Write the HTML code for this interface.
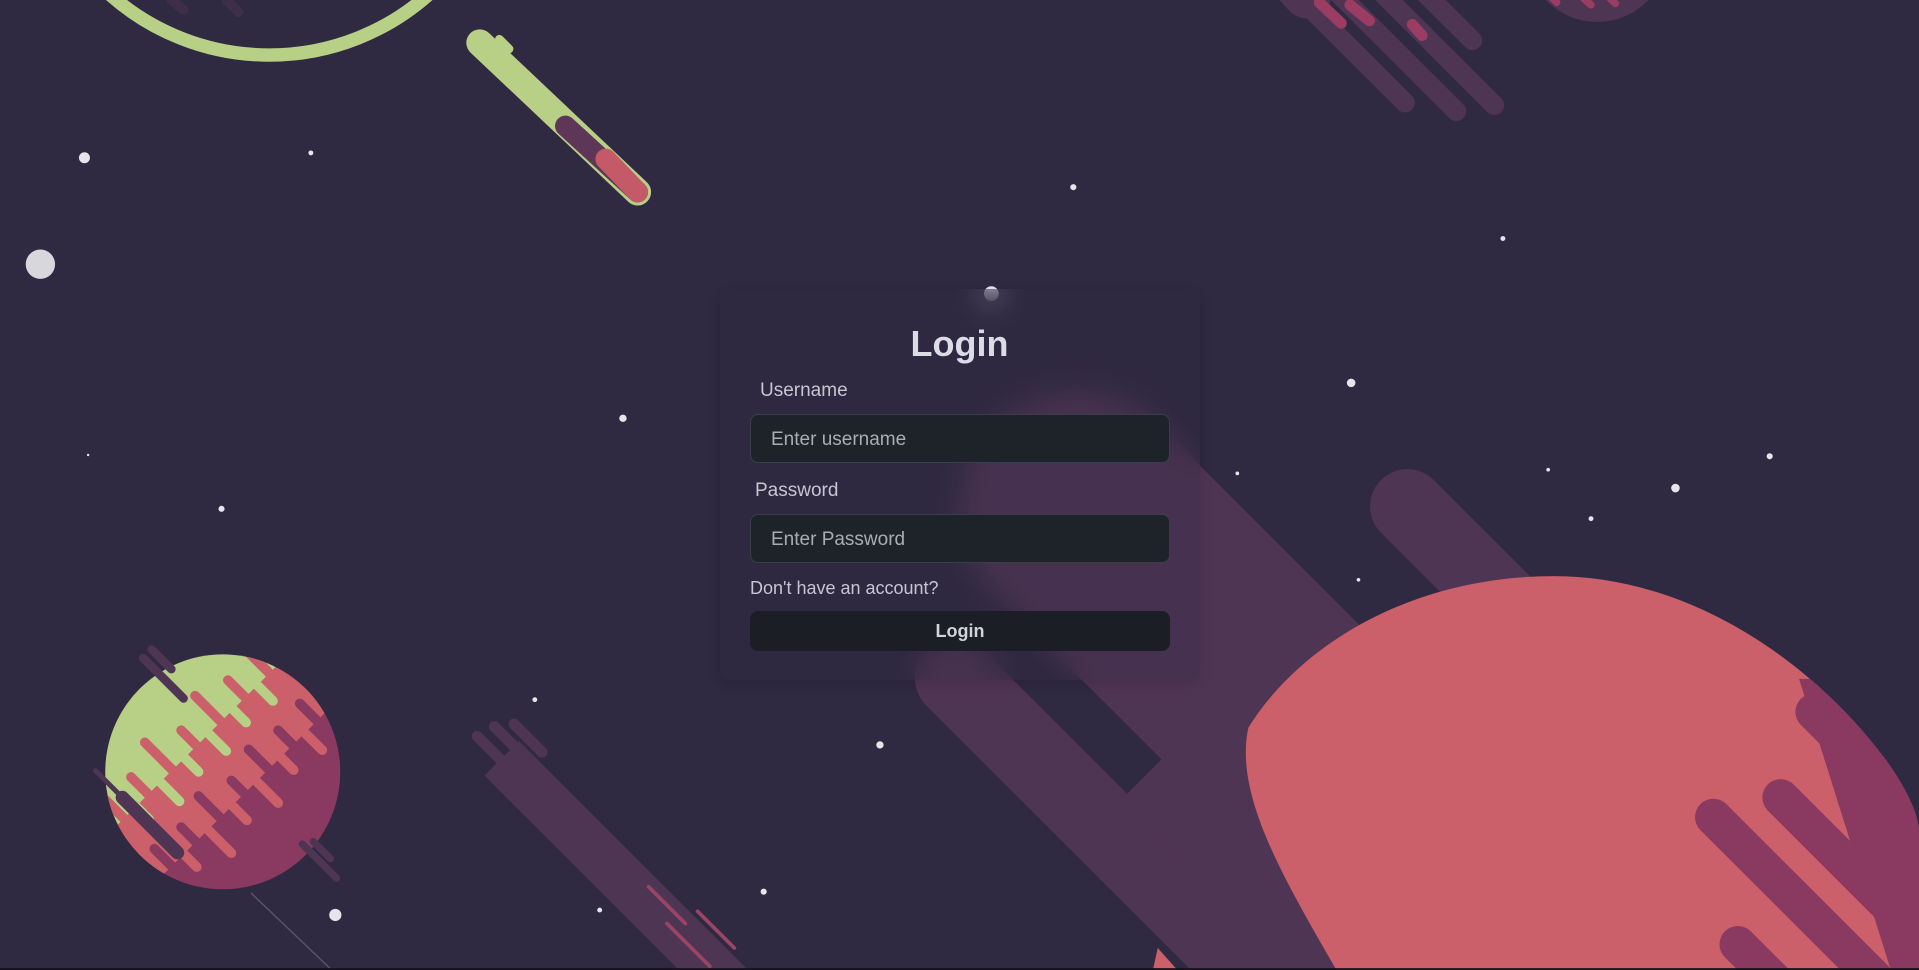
<!DOCTYPE html>
<html><head><meta charset="utf-8"><style>
html,body{margin:0;padding:0;width:1919px;height:970px;overflow:hidden;background:#2f2941;font-family:"Liberation Sans",sans-serif;position:relative}
svg.bg{position:absolute;left:0;top:0;width:1919px;height:970px;display:block}
.card{position:absolute;left:720px;top:289px;width:480px;height:391px;border-radius:10px;background:rgba(47,41,66,0.25);backdrop-filter:blur(14px);-webkit-backdrop-filter:blur(14px);box-shadow:0 4px 14px rgba(0,0,0,0.12)}
.t{position:absolute;white-space:nowrap;line-height:1}
.inp{position:absolute;left:750px;width:418px;height:47px;border:1px solid #3a3f46;border-radius:8px;background:#1e232a;}
.inp span{position:absolute;left:20px;top:14px;font-size:19px;color:#a9adb3}
.btn{position:absolute;left:750px;top:611px;width:420px;height:40px;border-radius:8px;background:#1b1f25;color:#d2d2da;font-size:18px;font-weight:bold;text-align:center;line-height:40px}
</style></head><body>
<svg class="bg" viewBox="0 0 1568 793" preserveAspectRatio="none">
<defs>
<clipPath id="bp"><circle cx="182" cy="631" r="96"/></clipPath>
<clipPath id="bigp"><path d="M1092,793 C1050,720 1008,650 1020,595 C1060,530 1150,471 1270,471 C1380,471 1480,540 1540,620 C1555,640 1568,665 1568,680 L1568,793 Z"/></clipPath>
<clipPath id="trp"><circle cx="1305" cy="-40" r="58"/></clipPath>
</defs>
<circle cx="220" cy="-151" r="196" fill="none" stroke="#b8cf86" stroke-width="11"/>
<path d="M140,0 L150,8 M185,0 L195,10" stroke="#3d2f4a" stroke-width="8" stroke-linecap="round"/>
<circle cx="1305" cy="-40" r="58" fill="#4f3554"/>
<g clip-path="url(#trp)" stroke="#9b3d62" stroke-width="6" stroke-linecap="round"><path d="M1265,-5 L1272,2 M1290,-5 L1300,4 M1312,-5 L1320,3"/></g>
<g stroke="#4f3554" stroke-linecap="round" fill="none">
<path d="M1045,-30 L1068,-5" stroke-width="40"/>
<path d="M1054,-10 L1148,84" stroke-width="16"/>
<path d="M1089,-10 L1190,91" stroke-width="16"/>
<path d="M1125,-10 L1221,86" stroke-width="16"/>
<path d="M1160,-10 L1203,33" stroke-width="16"/>
</g>
<g stroke="#9b3d62" stroke-linecap="round" stroke-width="9"><path d="M1078,2 L1096,19 M1103,4 L1119,17 M1154,20 L1162,29"/></g>
<path d="M392,35 L521,157" stroke="#b8cf86" stroke-width="22" stroke-linecap="round"/>
<path d="M462,103 L521,157" stroke="#5e3658" stroke-width="17" stroke-linecap="round"/>
<path d="M495,130 L521,157" stroke="#c45a68" stroke-width="17" stroke-linecap="round"/>
<path d="M397,30 L405,38 M408,32 L416,40" stroke="#b8cf86" stroke-width="7" stroke-linecap="round"/>
<g stroke="#4f3554" stroke-linecap="round" fill="none">
<path d="M880,416 L1300,836" stroke-width="192"/>
<path d="M780,554 L1100,874" stroke-width="65"/>
<path d="M935,635 L1200,900" stroke-width="60" stroke-linecap="butt"/>
<path d="M1150,414 L1350,614" stroke-width="61"/>
<path d="M410,620 L620,830" stroke-width="40" stroke-linecap="butt"/>
<path d="M390,602 L413,625 M404,594 L428,618 M420,592 L443,615" stroke-width="9"/>
</g>
<g stroke="#9a4565" stroke-width="3" stroke-linecap="round"><path d="M530,725 L560,755 M545,755 L580,790 M570,745 L600,775"/></g>
<path d="M942,793 L962,793 L946,775 Z" fill="#cb5f6a"/>
<path d="M1092,793 C1050,720 1008,650 1020,595 C1060,530 1150,471 1270,471 C1380,471 1480,540 1540,620 C1555,640 1568,665 1568,680 L1568,793 Z" fill="#cb5f6a"/>
<g clip-path="url(#bigp)">
<path d="M1470,555 L1600,555 L1600,793 L1545,793 Z" fill="#8a3960"/>
<g stroke="#8a3960" stroke-width="30" stroke-linecap="round">
<path d="M1482,582 L1580,680"/>
<path d="M1455,652 L1600,797"/>
<path d="M1400,668 L1600,868"/>
<path d="M1420,772 L1460,812"/>
</g>
</g>
<circle cx="182" cy="631" r="96" fill="#8a3960"/>
<g clip-path="url(#bp)">
<g transform="translate(182,631) rotate(45)" stroke-linecap="round">
<rect x="-200" y="-200" width="170" height="400" fill="#b8cf86"/>
<rect x="-30" y="-200" width="55" height="400" fill="#cb5f6a"/>
<g stroke="#cb5f6a" stroke-width="8">
<path d="M-30,-84 L-55,-84 M-30,-56 L-50,-56 M-30,-28 L-60,-28 M-30,0 L-48,0 M-30,28 L-62,28 M-30,56 L-50,56 M-30,84 L-58,84"/>
<path d="M25,-70 L45,-70 M25,-42 L40,-42 M25,-14 L50,-14 M25,14 L42,14 M25,42 L52,42 M25,70 L40,70"/>
</g>
<g stroke="#b8cf86" stroke-width="8">
<path d="M-30,-70 L-12,-70 M-30,-42 L-15,-42 M-30,-14 L-10,-14 M-30,14 L-14,14 M-30,42 L-8,42 M-30,70 L-15,70"/>
</g>
<g stroke="#8a3960" stroke-width="8">
<path d="M25,-84 L5,-84 M25,-56 L8,-56 M25,-28 L2,-28 M25,0 L10,0 M25,28 L0,28 M25,56 L8,56 M25,84 L5,84"/>
</g>
</g>
</g>
<g stroke="#4f3554" stroke-linecap="round" fill="none">
<path d="M117,538 L150,571 M124,531 L140,547" stroke-width="7"/>
<path d="M78,630 L140,692" stroke-width="4"/>
<path d="M100,652 L145,697" stroke-width="11"/>
<path d="M247,690 L275,718 M256,688 L270,702" stroke-width="6"/>
</g>
<path d="M205,730 L270,792" stroke="#5a5468" stroke-width="1.2"/>
<g fill="#e6e6ea">
<circle cx="69" cy="129" r="4.5"/><circle cx="33" cy="216" r="12" fill="#d8d8dc"/>
<circle cx="254" cy="125" r="2"/><circle cx="509" cy="342" r="3"/><circle cx="181" cy="416" r="2.5"/>
<circle cx="877" cy="153" r="2.5"/><circle cx="1228" cy="195" r="2"/><circle cx="1104" cy="313" r="3.5"/>
<circle cx="1369" cy="399" r="3.5"/><circle cx="1446" cy="373" r="2.5"/><circle cx="1300" cy="424" r="2"/>
<circle cx="1265" cy="384" r="1.5"/><circle cx="1011" cy="387" r="1.5"/><circle cx="1110" cy="474" r="1.5"/>
<circle cx="719" cy="609" r="3"/><circle cx="624" cy="729" r="2.5"/><circle cx="490" cy="744" r="2"/>
<circle cx="437" cy="572" r="2"/><circle cx="274" cy="748" r="5"/><circle cx="72" cy="372" r="1"/>
<circle cx="810" cy="240" r="6"/>
</g>
<rect x="0" y="791.5" width="1568" height="1.5" fill="#141218"/>
</svg>
<div class="card"></div>
<div class="t" style="left:0;width:1919px;text-align:center;top:326px;font-size:36px;font-weight:bold;color:#dcdce6">Login</div>
<div class="t" style="left:760px;top:381px;font-size:19px;color:#c6c6d0">Username</div>
<div class="inp" style="top:414px"><span>Enter username</span></div>
<div class="t" style="left:755px;top:481px;font-size:19px;color:#c6c6d0">Password</div>
<div class="inp" style="top:514px"><span>Enter Password</span></div>
<div class="t" style="left:750px;top:579px;font-size:18px;color:#c6c6d0">Don't have an account?</div>
<div class="btn">Login</div>
</body></html>
